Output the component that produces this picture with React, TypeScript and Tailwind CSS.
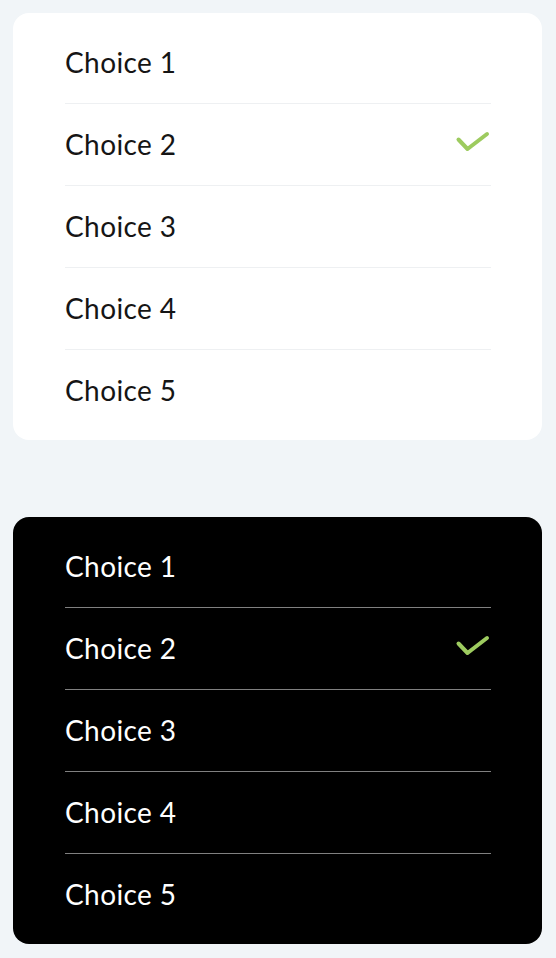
import React from "react";

const choices = ["Choice 1", "Choice 2", "Choice 3", "Choice 4", "Choice 5"];

const Check = () => (
  <svg width="36" height="26" viewBox="0 0 36 26" fill="none">
    <path
      d="M3.5 8.5 L12.5 18 L32 3"
      stroke="#9dcb5f"
      strokeWidth="4"
      strokeLinecap="round"
      strokeLinejoin="round"
    />
  </svg>
);

const ChoiceList = ({ dark }: { dark?: boolean }) => (
  <div
    className={`w-[529px] rounded-[16px] pt-[9px] pb-2 pl-[52px] pr-[51px] ${
      dark ? "bg-black text-white" : "bg-white text-[#151515]"
    }`}
  >
    {choices.map((c, i) => (
      <div
        key={c}
        className={`h-[82px] flex items-center justify-between ${
          i < choices.length - 1
            ? dark
              ? "border-b border-[#808080]"
              : "border-b border-[#eef0f2]"
            : ""
        }`}
      >
        <span className="text-[28px] font-normal tracking-[0.4px] leading-none pb-[2px]">
          {c}
        </span>
        {i === 1 && (
          <span className="-mt-[2px]">
            <Check />
          </span>
        )}
      </div>
    ))}
  </div>
);

export default function App() {
  return (
    <div
      className="min-h-[958px] bg-[#f1f5f8] pl-[13px] pt-[13px] flex flex-col gap-[77px]"
      style={{ fontFamily: "Lato, 'Open Sans', sans-serif" }}
    >
      <ChoiceList />
      <ChoiceList dark />
    </div>
  );
}
